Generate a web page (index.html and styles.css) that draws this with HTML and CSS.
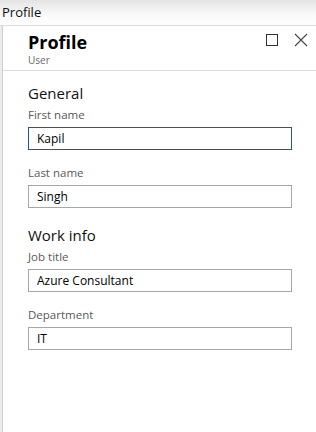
FILE: index.html
```html
<!DOCTYPE html>
<html lang="en">
<head>
  <meta charset="UTF-8" />
  <title>Profile</title>
  <link rel="stylesheet" href="styles.css">
</head>
<body>
  <div class="topbar">Profile</div>
  <div class="blade">
    <div class="blade-header">
      <div class="titles">
        <div class="title">Profile</div>
        <div class="subtitle">User</div>
      </div>
      <div class="controls">
        <svg class="ctl" width="13" height="13" viewBox="0 0 13 13"><rect x="1.5" y="1.5" width="11" height="11" fill="none" stroke="#333" stroke-width="1"/></svg>
        <svg class="ctl" width="14" height="14" viewBox="0 0 14 14"><path d="M1 1 L13 13 M13 1 L1 13" stroke="#444" stroke-width="1.1" fill="none"/></svg>
      </div>
    </div>
    <div class="blade-content">
      <div class="section">General</div>
      <label class="label">First name</label>
      <input class="field focused" type="text" value="Kapil">
      <label class="label">Last name</label>
      <input class="field" type="text" value="Singh">

      <div class="section work">Work info</div>
      <label class="label">Job title</label>
      <input class="field" type="text" value="Azure Consultant">
      <label class="label">Department</label>
      <input class="field" type="text" value="IT">
    </div>
  </div>
</body>
</html>
```

FILE: styles.css
```css
body, html {
  margin: 0;
  padding: 0;
  height: 100%;
  overflow: hidden;
  font-family: 'Open Sans', 'Noto Sans', Arial, sans-serif;
  background: #fff;
}
.topbar {
  height: 25px;
  line-height: 24px;
  padding-left: 2px;
  font-size: 13px;
  color: #111;
  border-bottom: 1px solid #dcdcdc;
  background: linear-gradient(#e4e4e4, #fafafa 60%, #fff);
}
.blade {
  height: calc(100% - 26px);
  margin-left: 2px;
  border-left: 1px solid #cfcfcf;
  box-shadow: -2px 0 0 #ececec;
}
.blade-header {
  display: flex;
  justify-content: space-between;
  height: 44px;
  border-bottom: 1px solid #dcdcdc;
}
.titles {
  padding: 4px 0 0 25px;
}
.title {
  font-size: 18px;
  font-weight: 700;
  line-height: 24px;
  color: #000;
}
.subtitle {
  font-size: 10px;
  line-height: 12px;
  color: #666;
}
.controls {
  display: flex;
  gap: 16px;
  padding: 7px 8px 0 0;
}
.ctl {
  display: block;
}
.blade-content {
  padding: 12px 24px 0 25px;
  display: flex;
  flex-direction: column;
}
.section {
  font-size: 15px;
  line-height: 20px;
  color: #111;
  margin-bottom: 4px;
}
.section.work {
  margin-top: 2px;
}
.label {
  font-size: 11.5px;
  line-height: 16px;
  color: #595959;
  margin-bottom: 4px;
}
.field {
  box-sizing: border-box;
  width: 264px;
  height: 23px;
  padding: 0 8px;
  font-family: inherit;
  font-size: 12px;
  color: #000;
  border: 1px solid #a6a6a6;
  border-radius: 0;
  outline: none;
  margin-bottom: 15px;
}
.field.focused {
  border-color: #1a5aa0;
}
```
